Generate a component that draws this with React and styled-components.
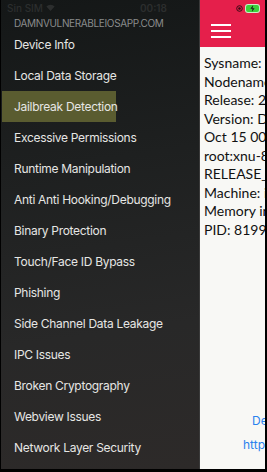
import styled, { createGlobalStyle } from "styled-components";

const GlobalStyle = createGlobalStyle`
    html, body {
        margin: 0;
        padding: 0;
        background: #000;
    }
    #root {
        width: 267px;
        height: 472px;
    }
`;

const menuItems = [
    "Device Info",
    "Local Data Storage",
    "Jailbreak Detection",
    "Excessive Permissions",
    "Runtime Manipulation",
    "Anti Anti Hooking/Debugging",
    "Binary Protection",
    "Touch/Face ID Bypass",
    "Phishing",
    "Side Channel Data Leakage",
    "IPC Issues",
    "Broken Cryptography",
    "Webview Issues",
    "Network Layer Security",
];

const infoLines = [
    "Sysname: Darwin",
    "Nodename: iPhone",
    "Release: 22.1.0",
    "Version: Darwin Kernel Version",
    "Oct 15 00:00:00 PDT 2022;",
    "root:xnu-8792.42.7~1/",
    "RELEASE_ARM64_T8101",
    "Machine: iPhone13,2",
    "Memory in use: 123",
    "PID: 81991",
];

const App = () => {
    const active = "Jailbreak Detection";
    return (
        <>
            <GlobalStyle />
            <Screen>
                <Drawer>
                    <StatusBar>
                        <span>Sin SIM</span>
                        <svg width="9" height="7" viewBox="0 0 12 9">
                            <path d="M6 9 L0.5 3 A8 8 0 0 1 11.5 3 Z" fill="#2c2e2e" />
                        </svg>
                        <Clock>00:18</Clock>
                    </StatusBar>
                    <Domain>DAMNVULNERABLEIOSAPP.COM</Domain>
                    <Menu>
                        {menuItems.map((item) => (
                            <MenuItem key={item} $active={item === active}>
                                {item}
                            </MenuItem>
                        ))}
                    </Menu>
                </Drawer>
                <Main>
                    <Header>
                        <HeaderIcons>
                            <svg width="7" height="7" viewBox="0 0 10 10">
                                <circle cx="5" cy="5" r="4" fill="none" stroke="#3a0a14" strokeWidth="1.4" />
                                <circle cx="5" cy="5" r="1.8" fill="#3a0a14" />
                            </svg>
                            <Battery>
                                <svg width="7" height="7" viewBox="0 0 10 10">
                                    <path d="M6 0 L2 5.5 H5 L4 10 L8 4.5 H5 Z" fill="#1a1a1a" />
                                </svg>
                            </Battery>
                        </HeaderIcons>
                        <Hamburger>
                            <span />
                            <span />
                            <span />
                        </Hamburger>
                    </Header>
                    <Content>
                        <InfoText>
                            {infoLines.map((line) => (
                                <div key={line}>{line}</div>
                            ))}
                        </InfoText>
                        <Links>
                            <Link $indent={48}>Developer: Prateek</Link>
                            <Link $indent={39}>https://damnvulnerableiosapp.com</Link>
                        </Links>
                    </Content>
                </Main>
            </Screen>
        </>
    );
};

export default App;

const Screen = styled.div`
    width: 267px;
    height: 472px;
    box-sizing: border-box;
    border-left: 1px solid #000;
    border-right: 2px solid #000;
    border-bottom: 3px solid #000;
    display: flex;
    overflow: hidden;
    font-family: Inter, "Liberation Sans", sans-serif;
`;

const Drawer = styled.div`
    width: 198px;
    flex-shrink: 0;
    display: flex;
    flex-direction: column;
    background: linear-gradient(172deg, #141717 0%, #1e2020 35%, #282828 70%, #2d2a29 100%);
    border-right: 1px solid #3a3a3a;
`;

const StatusBar = styled.div`
    height: 16px;
    display: flex;
    align-items: center;
    gap: 3px;
    padding-left: 6px;
    font-size: 10px;
    color: #2c2e2e;
    font-weight: 500;

    svg {
        margin-top: -1px;
    }
`;

const Clock = styled.span`
    margin-left: 82px;
    font-weight: 600;
`;

const Domain = styled.div`
    font-size: 10px;
    color: #8a8c8c;
    padding-left: 13px;
    margin-top: 1px;
    letter-spacing: -0.35px;
`;

const Menu = styled.div`
    display: flex;
    flex-direction: column;
`;

const MenuItem = styled.div`
    height: 31px;
    display: flex;
    align-items: center;
    padding-left: 12px;
    margin-left: 1px;
    width: ${({ $active }) => ($active ? "102px" : "auto")};
    font-size: 12px;
    color: #e6e6e4;
    white-space: nowrap;
    background: ${({ $active }) => ($active ? "#5a5c30" : "transparent")};
    letter-spacing: -0.3px;
`;

const Main = styled.div`
    flex: 1;
    display: flex;
    flex-direction: column;
    min-width: 0;
    overflow: hidden;
    background: #f8f8f5;
`;

const Header = styled.div`
    height: 47px;
    background: #e51f4b;
    display: flex;
    flex-direction: column;
    padding: 4px 0 0 11px;
    box-sizing: border-box;
`;

const HeaderIcons = styled.div`
    display: flex;
    align-items: center;
    justify-content: flex-end;
    gap: 3px;
    padding-right: 6px;
    height: 8px;
`;

const Battery = styled.div`
    width: 13px;
    height: 7px;
    border-radius: 2px;
    background: #3bd03b;
    display: flex;
    align-items: center;
    justify-content: center;
    box-shadow: 0 0 0 1px #c8f0c8;
`;

const Hamburger = styled.div`
    display: flex;
    flex-direction: column;
    gap: 4.5px;
    margin-top: 12px;

    span {
        display: block;
        width: 20px;
        height: 1.5px;
        background: #fff;
    }
`;

const Content = styled.div`
    flex: 1;
    display: flex;
    flex-direction: column;
    padding: 7px 0 0 4px;
`;

const InfoText = styled.div`
    font-family: Lato, "Noto Sans", sans-serif;
    font-size: 14px;
    line-height: 18.5px;
    color: #111;
    white-space: nowrap;
`;

const Links = styled.div`
    margin-top: auto;
    display: flex;
    flex-direction: column;
    gap: 9px;
    padding-bottom: 17px;
`;

const Link = styled.div`
    padding-left: ${({ $indent }) => $indent}px;
    font-size: 12px;
    color: #2a82ee;
    white-space: nowrap;
`;
